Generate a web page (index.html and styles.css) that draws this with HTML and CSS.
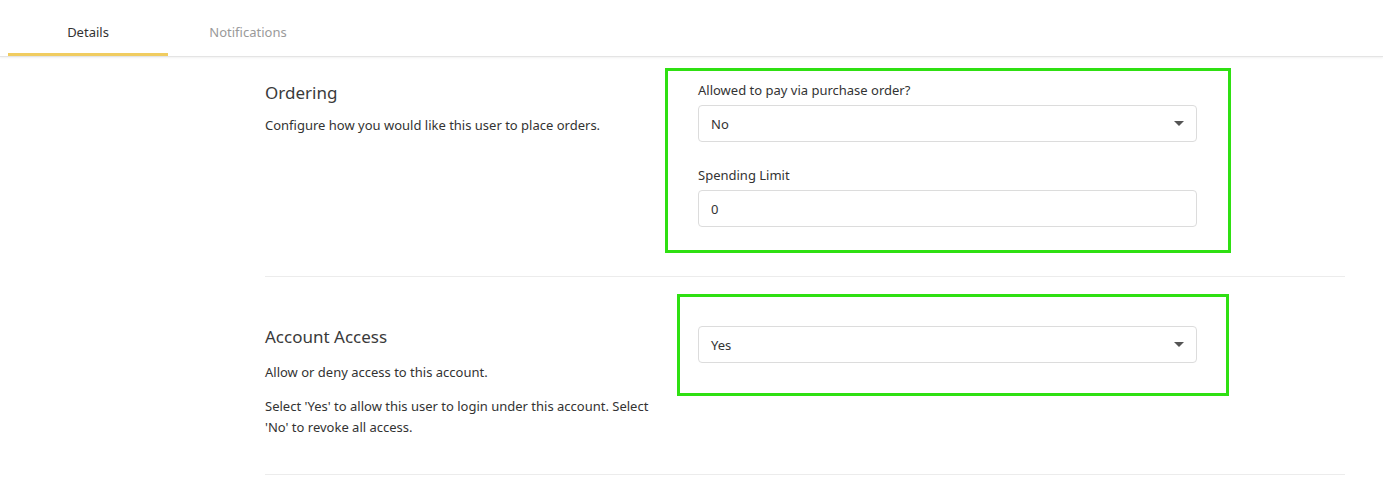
FILE: index.html
```html
<!DOCTYPE html>
<html>
<head>
<meta charset="utf-8">
<link rel="stylesheet" href="styles.css">
</head>
<body>
<nav class="tabs">
  <div class="tab active">Details</div>
  <div class="tab">Notifications</div>
</nav>
<main class="content">
  <section class="row row-ordering">
    <div class="info">
      <h2 class="title">Ordering</h2>
      <p class="desc">Configure how you would like this user to place orders.</p>
    </div>
    <div class="fields">
      <label class="label">Allowed to pay via purchase order?</label>
      <div class="select"><span>No</span><span class="caret"></span></div>
      <label class="label label-gap">Spending Limit</label>
      <div class="input">0</div>
      <div class="highlight hl-1"></div>
    </div>
  </section>
  <section class="row row-access">
    <div class="info">
      <h2 class="title">Account Access</h2>
      <p class="desc">Allow or deny access to this account.</p>
      <p class="desc desc-2">Select 'Yes' to allow this user to login under this account. Select 'No' to revoke all access.</p>
    </div>
    <div class="fields fields-access">
      <div class="select"><span>Yes</span><span class="caret"></span></div>
      <div class="highlight hl-2"></div>
    </div>
  </section>
</main>
</body>
</html>
```

FILE: styles.css
```css
* { box-sizing: border-box; }
html, body { margin: 0; padding: 0; background: #fff; }
body {
  font-family: "Noto Sans", "Open Sans", sans-serif;
  color: #333;
  width: 1383px;
  height: 485px;
  overflow: hidden;
}
.tabs {
  display: flex;
  padding-left: 8px;
  height: 57px;
  border-bottom: 1px solid #e4e4e4;
  box-shadow: 0 1px 2px rgba(0,0,0,0.06);
}
.tab {
  width: 160px;
  display: flex;
  align-items: center;
  justify-content: center;
  font-size: 13px;
  color: #9a9a9a;
  padding-top: 10px;
  border-bottom: 3px solid transparent;
}
.tab.active {
  color: #333;
  border-bottom-color: #f0cc60;
}
.content {
  margin-left: 265px;
  width: 1080px;
}
.row {
  display: grid;
  grid-template-columns: 433px 499px;
  align-items: start;
  border-bottom: 1px solid #ececec;
}
.row-ordering { padding-top: 24px; height: 220px; }
.row-access { padding-top: 48px; height: 198px; }
.fields { position: relative; }
.fields-access { margin-top: 1px; }
.title {
  margin: 0;
  font-weight: 400;
  font-size: 17px;
  line-height: 24px;
  color: #3a3a3a;
}
.desc {
  margin: 10px 0 0;
  font-size: 13px;
  line-height: 21px;
  color: #333;
  max-width: 395px;
}
.row-access .desc { margin-top: 13px; }
.row-access .desc-2 { margin-top: 13px; }
.label {
  display: block;
  font-size: 13px;
  line-height: 18px;
  color: #333;
  margin-bottom: 6px;
}
.label-gap { margin-top: 24px; }
.select, .input {
  height: 37px;
  border: 1px solid #dcdcdc;
  border-radius: 4px;
  display: flex;
  align-items: center;
  justify-content: space-between;
  padding: 0 12px 0 12px;
  font-size: 13px;
  color: #333;
}
.caret {
  width: 0; height: 0;
  border-left: 5px solid transparent;
  border-right: 5px solid transparent;
  border-top: 5px solid #555;
}
.highlight {
  position: absolute;
  border: 3px solid #2fe012;
  pointer-events: none;
}
.hl-1 { left: -33px; right: -34px; top: -13px; bottom: -26px; }
.hl-2 { left: -21px; right: -32px; top: -32px; bottom: -33px; }
```
